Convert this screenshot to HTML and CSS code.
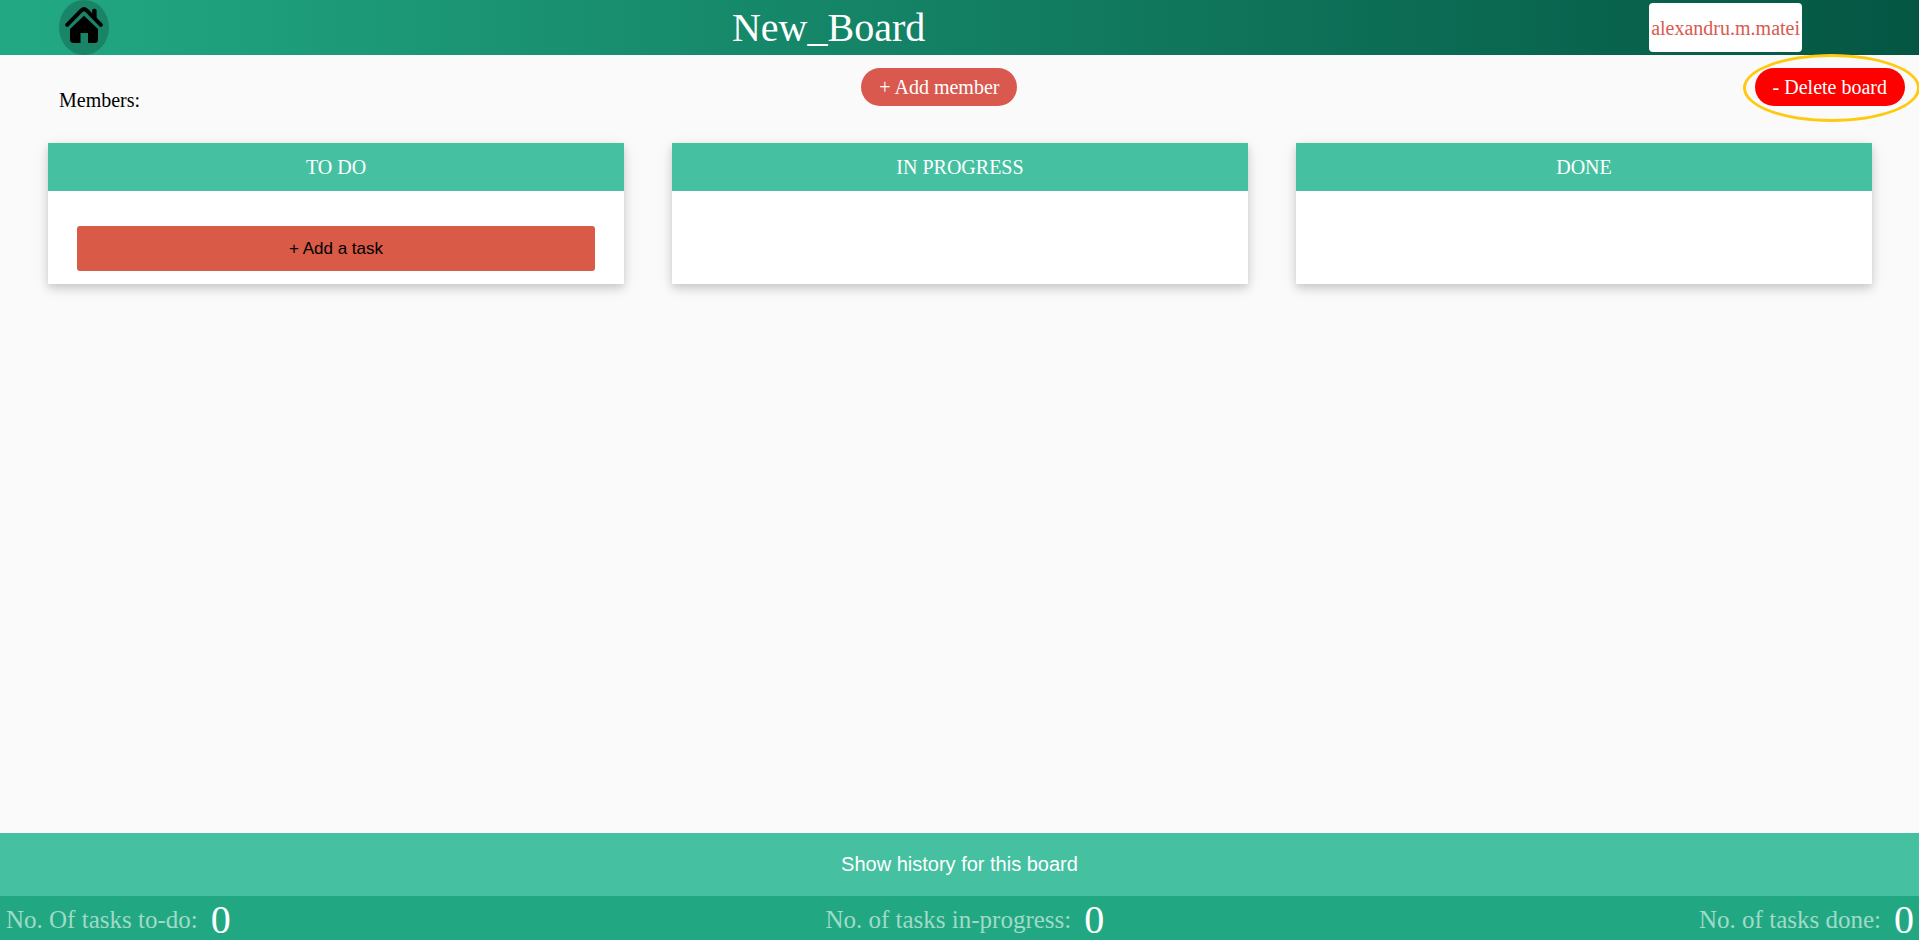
FILE: index.html
```html
<!DOCTYPE html>
<html lang="en">
<head>
<meta charset="utf-8">
<title>New_Board</title>
<link rel="stylesheet" href="styles.css">
</head>
<body class="page">
<header class="topbar">
  <a class="home" href="#" aria-label="Home">
    <svg class="home-icon" viewBox="0 0 38 38" aria-hidden="true">
      <path d="M2.200 17.800 16.600 3.200Q19 1 21.400 3.200L35.800 17.800" fill="none" stroke="#000" stroke-width="4" stroke-linecap="round" stroke-linejoin="round"/>
      <path d="M27.200 9V3.600q0-1.800 1.800-1.800h.8q1.800 0 1.800 1.800v9.400z"/>
      <path d="M19 8.800 33 22V32.500q0 3.500-3.500 3.500H23V26h-7.500v10H9Q5 36 5 32.500V22z"/>
    </svg>
  </a>
  <h1 class="board-title">New_Board</h1>
  <button class="user" type="button">alexandru.m.matei</button>
</header>
<main class="board">
  <div class="toolbar">
    <p class="members">Members:</p>
    <button class="pill add-member" type="button">+ Add member</button>
    <div class="delete">
      <button class="pill danger" type="button">- Delete board</button>
      <span class="highlight"></span>
    </div>
  </div>
  <div class="columns">
    <section class="column">
      <h2 class="column-title">TO DO</h2>
      <div class="column-body"><button class="add-task" type="button">+ Add a task</button></div>
    </section>
    <section class="column">
      <h2 class="column-title">IN PROGRESS</h2>
    </section>
    <section class="column">
      <h2 class="column-title">DONE</h2>
    </section>
  </div>
</main>
<button class="history" type="button">Show history for this board</button>
<footer class="stats">
  <p class="stat"><span class="stat-label">No. Of tasks to-do:</span><span class="stat-value">0</span></p>
  <p class="stat"><span class="stat-label">No. of tasks in-progress:</span><span class="stat-value">0</span></p>
  <p class="stat"><span class="stat-label">No. of tasks done:</span><span class="stat-value">0</span></p>
</footer>
</body>
</html>
```
FILE: styles.css
```css
* { box-sizing: border-box; }

.page {
  display: flex;
  flex-direction: column;
  min-height: 100vh;
  margin: 0;
  overflow-x: hidden;
  background: #fafafa;
  color: #000;
  font: 20px/24px "Liberation Serif", "Times New Roman", serif;
}

h1, h2, p { margin: 0; font-weight: 400; }

button {
  border: 0;
  font: inherit;
  cursor: pointer;
}

.topbar {
  display: flex;
  align-items: center;
  height: 55px;
  padding: 0 117px 0 59px;
  background: linear-gradient(to right, #22a984, #045643);
}

.home {
  display: flex;
  justify-content: center;
  width: 50px;
  height: 55px;
  padding-top: 7px;
  border-radius: 50%;
  background: rgba(0, 0, 0, 0.2);
}

.home-icon { width: 38px; height: 38px; }

.board-title {
  flex: 1;
  padding-right: 101px;
  color: #fff;
  font-size: 40px;
  line-height: 46px;
  text-align: center;
}

.user {
  height: 49px;
  padding: 0 2px;
  border-radius: 4px;
  background: #fff;
  color: #d9594f;
}

.board { flex: 1; }

.toolbar {
  display: flex;
  justify-content: space-between;
  align-items: flex-start;
  padding: 13px 14px 0 59px;
}

.members { padding-top: 20px; }

.pill {
  height: 38px;
  padding: 0 18px;
  border-radius: 19px;
  color: #fff;
}

.add-member { margin-right: 16px; background: #d9594f; }

.delete { position: relative; }

.danger { background: #f00; }

.highlight {
  position: absolute;
  inset: -14px -15px -16px -12px;
  border: 3px solid #ffc90e;
  border-radius: 50%;
  pointer-events: none;
}

.columns {
  display: grid;
  grid-template-columns: repeat(3, 1fr);
  gap: 48px;
  padding: 31px 47px 0 48px;
}

.column {
  background: #fff;
  box-shadow: 0 4px 8px rgba(0, 0, 0, 0.14), 0 4px 16px rgba(0, 0, 0, 0.09);
}

.column-title {
  background: #45c1a1;
  color: #fff;
  font-size: 20px;
  line-height: 48px;
  text-align: center;
}

.column-body { padding: 35px 29px 13px; }

.add-task {
  display: block;
  width: 100%;
  height: 45px;
  border-radius: 3px;
  background: #d95a47;
  color: #000;
  font: 17px/20px "Liberation Sans", Arial, sans-serif;
}

.history {
  height: 63px;
  padding-bottom: 3px;
  background: #45c1a1;
  color: #fff;
  font: 20px/24px "Liberation Sans", Arial, sans-serif;
}

.stats {
  display: flex;
  justify-content: space-between;
  height: 44px;
  padding: 4px 5px 0 6px;
  background: #21a883;
}

.stat {
  display: flex;
  align-items: center;
  gap: 13px;
  line-height: 40px;
}

.stat-label { color: #a0dac8; font-size: 25px; }

.stat-value { color: #fff; font-size: 40px; }
```
